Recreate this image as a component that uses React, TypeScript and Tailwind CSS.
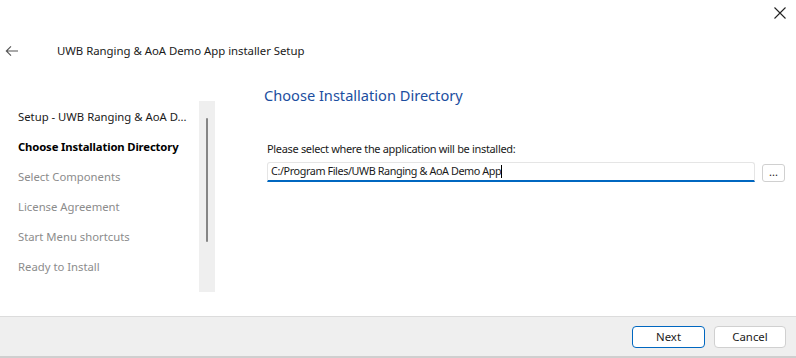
import React from "react";

export default function App() {
  const items = [
    { t: "Setup - UWB Ranging & AoA D...", c: "text-[#1a1a1a]" },
    { t: "Choose Installation Directory", c: "text-black font-bold tracking-[-0.15px]" },
    { t: "Select Components", c: "text-[#8c8c8c]" },
    { t: "License Agreement", c: "text-[#8c8c8c]" },
    { t: "Start Menu shortcuts", c: "text-[#8c8c8c]" },
    { t: "Ready to Install", c: "text-[#8c8c8c]" },
  ];
  return (
    <div
      className="w-[796px] h-[358px] bg-white flex flex-col overflow-hidden text-[12px] text-[#1a1a1a]"
      style={{ fontFamily: '"Noto Sans", "Open Sans", sans-serif' }}
    >
      {/* top bar */}
      <div className="h-[32px] flex justify-end items-start pt-[6px] pr-[8px]">
        <svg width="14" height="14" viewBox="0 0 14 14" className="mr-[1px]">
          <path d="M1.5 1.5 L12.5 12.5 M12.5 1.5 L1.5 12.5" stroke="#222" strokeWidth="1.1" fill="none" />
        </svg>
      </div>
      {/* title row */}
      <div className="h-[38px] flex items-center">
        <svg width="14" height="12" viewBox="0 0 14 12" className="ml-[5px]">
          <path d="M13 6 H1.5 M6 1.3 L1.3 6 L6 10.7" stroke="#555" strokeWidth="1.1" fill="none" />
        </svg>
        <span className="ml-[38px] leading-none text-[11.4px] tracking-[-0.03px]">UWB Ranging &amp; AoA Demo App installer Setup</span>
      </div>
      {/* main */}
      <div className="flex-1 flex items-start">
        <div className="flex mt-[31px] shrink-0">
          <div className="w-[199px] pl-[18px] pt-[6px] flex flex-col text-[11.3px]">
            {items.map((it) => (
              <div key={it.t} className={`h-[30px] leading-[20px] whitespace-nowrap ${it.c}`}>
                {it.t}
              </div>
            ))}
          </div>
          <div className="w-[16px] h-[191px] bg-[#efefef] flex justify-center pt-[17px]">
            <div className="w-[2px] h-[124px] bg-[#858585] rounded-full" />
          </div>
        </div>
        <div className="ml-[49px] flex-1 pt-[15px]">
          <div className="text-[14.6px] leading-[20px] text-[#1c4ea0] whitespace-nowrap">
            Choose Installation Directory
          </div>
          <div className="mt-[36px] ml-[3px] leading-[16px] whitespace-nowrap text-[11px] tracking-[-0.33px]">
            Please select where the application will be installed:
          </div>
          <div className="mt-[5px] flex items-start">
            <div className="w-[488px] h-[20px] ml-[3px] border border-[#e5e5e5] border-b-2 border-b-[#0067c0] rounded-t-[3px] flex items-center pl-[3px]">
              <span className="leading-none whitespace-nowrap text-[10.8px] tracking-[-0.4px]">C:/Program Files/UWB Ranging &amp; AoA Demo App</span>
              <span className="w-[1px] h-[13px] bg-black" />
            </div>
            <div className="ml-[7px] mt-[2px] w-[23px] h-[18px] border border-[#d0d0d0] rounded-[3px] flex items-center justify-center text-[11px] leading-none pb-[3px]">
              ...
            </div>
          </div>
        </div>
      </div>
      {/* footer */}
      <div className="h-[42px] bg-[#efefef] border-t border-[#dcdcdc] border-b-2 border-b-[#cfcfcf] flex justify-end items-start pt-[9px] pr-[10px] gap-[9px]">
        <div className="w-[73px] h-[22px] bg-white border border-[#0067c0] rounded-[4px] flex items-center justify-center leading-none text-[11.4px]">
          Next
        </div>
        <div className="w-[72px] h-[22px] bg-white border border-[#d0d0d0] rounded-[4px] flex items-center justify-center leading-none text-[11.4px]">
          Cancel
        </div>
      </div>
    </div>
  );
}
